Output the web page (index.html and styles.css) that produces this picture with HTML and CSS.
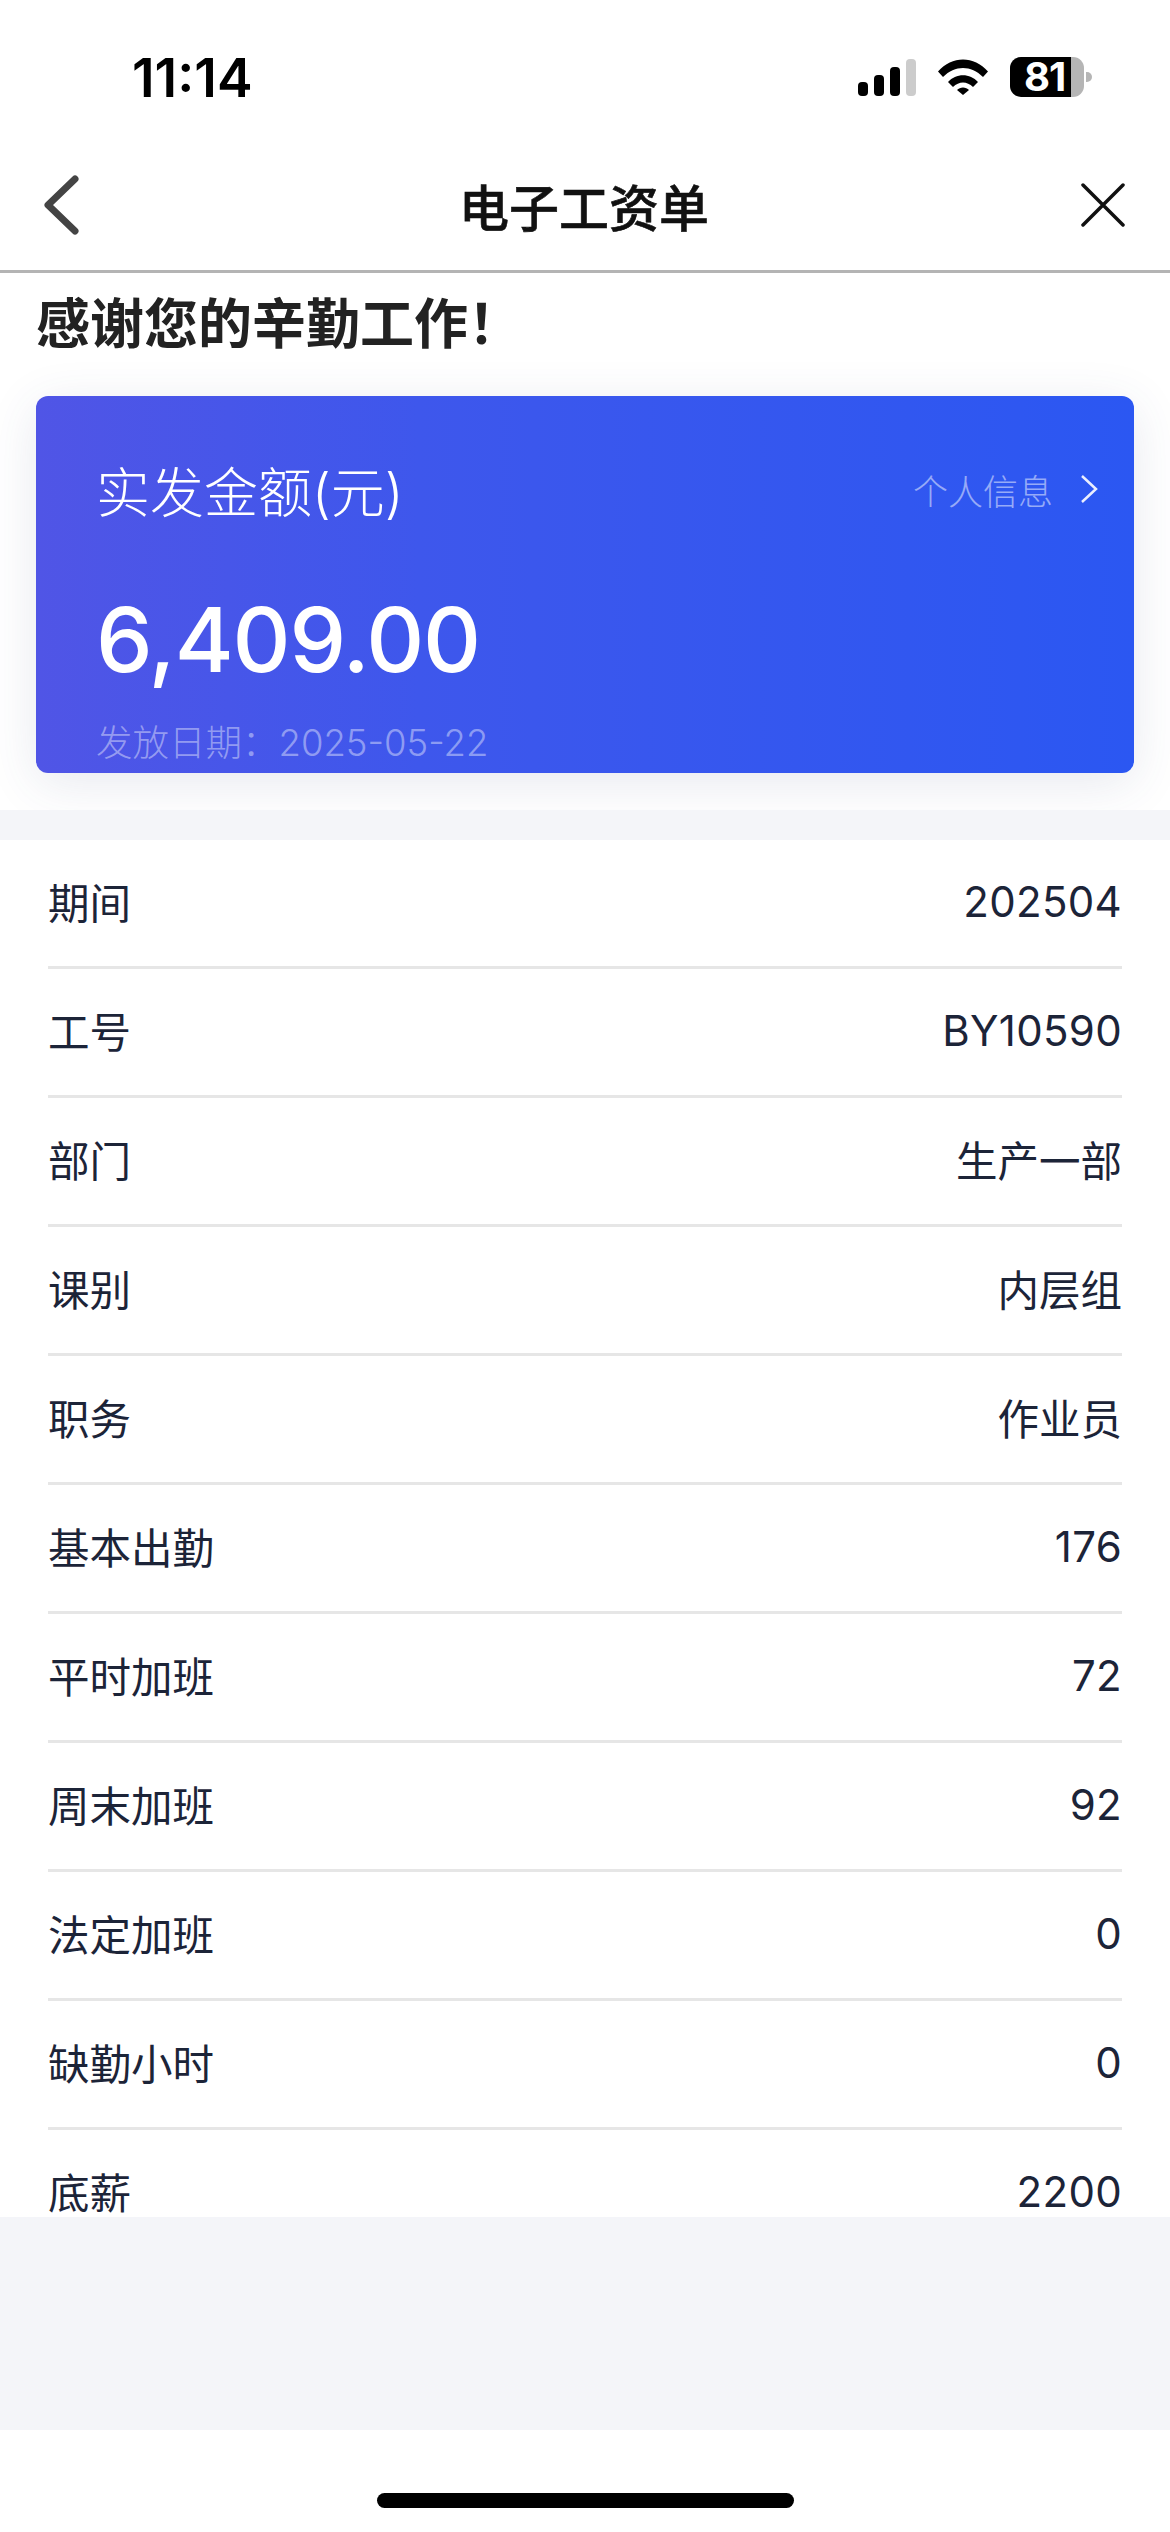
FILE: index.html
```html
<!DOCTYPE html>
<html lang="zh-CN">
<head>
  <meta charset="UTF-8" />
  <meta name="viewport" content="width=device-width, initial-scale=1" />
  <title>电子工资单</title>
  <link rel="stylesheet" href="styles.css">
</head>
<body>

<div class="status-bar">
  <span class="time">11:14</span>
  <div class="status-icons">
    <div class="signal">
      <span class="bar bar-1"></span>
      <span class="bar bar-2"></span>
      <span class="bar bar-3"></span>
      <span class="bar bar-4"></span>
    </div>
    <svg class="wifi" width="50" height="36" viewBox="0 0 50 36">
      <path d="M0 12.5 C14 -3.5 36 -3.5 50 12.5 L45 18 C33 6 17 6 5 18 Z" fill="#000"/>
      <path d="M10 23 C18 14 32 14 40 23 L35 28 C29 22 21 22 15 28 Z" fill="#000"/>
      <path d="M19 31 C22 27.5 28 27.5 31 31 L25 36 Z" fill="#000"/>
    </svg>
    <div class="battery">
      <div class="battery-body"><span class="battery-level">81</span></div>
      <span class="battery-nub"></span>
    </div>
  </div>
</div>

<div class="nav">
  <svg class="back" width="36" height="60" viewBox="0 0 36 60">
    <path d="M32 4 L5 30 L32 56" fill="none" stroke="#444" stroke-width="7" stroke-linecap="round" stroke-linejoin="round"/>
  </svg>
  <h1 class="nav-title">电子工资单</h1>
  <svg class="close" width="44" height="44" viewBox="0 0 44 44">
    <path d="M2 2 L42 42 M42 2 L2 42" fill="none" stroke="#111" stroke-width="3.5" stroke-linecap="round"/>
  </svg>
</div>

<div class="summary">
  <h2 class="thanks">感谢您的辛勤工作！</h2>
  <div class="pay-card">
    <div class="pay-top">
      <span class="pay-label">实发金额(元)</span>
      <span class="pay-link">个人信息
        <svg class="pay-arrow" width="20" height="30" viewBox="0 0 20 30">
          <path d="M3 2 L17 15 L3 28" fill="none" stroke="#fff" stroke-opacity="0.9" stroke-width="2.5"/>
        </svg>
      </span>
    </div>
    <div class="pay-amount">6,409.00</div>
    <div class="pay-date">发放日期：2025-05-22</div>
  </div>
</div>

<div class="band"></div>

<div class="detail-list">
  <div class="row"><span>期间</span><span class="num">202504</span></div>
  <div class="row"><span>工号</span><span class="num">BY10590</span></div>
  <div class="row"><span>部门</span><span>生产一部</span></div>
  <div class="row"><span>课别</span><span>内层组</span></div>
  <div class="row"><span>职务</span><span>作业员</span></div>
  <div class="row"><span>基本出勤</span><span class="num">176</span></div>
  <div class="row"><span>平时加班</span><span class="num">72</span></div>
  <div class="row"><span>周末加班</span><span class="num">92</span></div>
  <div class="row"><span>法定加班</span><span class="num">0</span></div>
  <div class="row"><span>缺勤小时</span><span class="num">0</span></div>
  <div class="row"><span>底薪</span><span class="num">2200</span></div>
</div>

<div class="empty"></div>

<div class="home-area">
  <div class="home-bar"></div>
</div>

</body>
</html>
```

FILE: styles.css
```css
html, body {
  margin: 0;
  padding: 0;
}

body {
  width: 1170px;
  height: 2532px;
  overflow: hidden;
  background-color: #fff;
  font-family: Inter, "Noto Sans CJK SC", sans-serif;
  color: #1c2438;
}

.status-bar {
  height: 130px;
  box-sizing: border-box;
  padding: 50px 78px 0 132px;
  display: flex;
  justify-content: space-between;
  align-items: flex-start;
}

.time {
  font-size: 53.5px;
  line-height: 56px;
  font-weight: 600;
  color: #000;
}

.status-icons {
  display: flex;
  align-items: flex-start;
  gap: 22px;
  padding-top: 7px;
}

.signal {
  display: flex;
  align-items: flex-end;
  gap: 6px;
  height: 37px;
  margin-top: 2px;
}

.bar {
  width: 10px;
  border-radius: 4px;
  background-color: #000;
}

.bar-1 { height: 14px; }
.bar-2 { height: 21px; }
.bar-3 { height: 29px; }
.bar-4 { height: 37px; background-color: #ccc; }

.wifi {
  margin-top: 2px;
}

.battery {
  display: flex;
  align-items: center;
  gap: 2px;
}

.battery-body {
  width: 74px;
  height: 40px;
  border-radius: 11px;
  background: linear-gradient(to right, #000 82%, #b5b5b5 82%);
}

.battery-level {
  display: block;
  padding-left: 14px;
  font-size: 40px;
  line-height: 40px;
  font-weight: 700;
  letter-spacing: -1px;
  color: #fff;
}

.battery-nub {
  width: 6px;
  height: 10px;
  border-radius: 0 5px 5px 0;
  background-color: #b5b5b5;
}

.nav {
  height: 143px;
  box-sizing: border-box;
  border-bottom: 3px solid #b4b4b4;
  padding: 10px 45px 0 43px;
  display: flex;
  justify-content: space-between;
  align-items: center;
}

.nav-title {
  margin: 0 0 0 8px;
  font-size: 50px;
  font-weight: 500;
  color: #111;
  -webkit-text-stroke: 0.6px #111;
}

.summary {
  height: 537px;
  box-sizing: border-box;
  padding: 0 36px;
}

.thanks {
  margin: 0;
  padding-top: 20px;
  height: 123px;
  box-sizing: border-box;
  font-size: 54px;
  line-height: 64px;
  font-weight: 700;
  color: #222;
  white-space: nowrap;
}

.pay-card {
  height: 377px;
  box-sizing: border-box;
  padding: 60px 35px 0 60px;
  border-radius: 12px;
  background: linear-gradient(to right, #5055e6, #3e57ec 35%, #2b57f2);
  box-shadow: 0 10px 50px rgba(60, 70, 120, 0.12);
  color: #fff;
}

.pay-top {
  display: flex;
  justify-content: space-between;
  align-items: center;
  height: 66px;
}

.pay-label {
  font-size: 54px;
  font-weight: 300;
}

.pay-link {
  display: flex;
  align-items: center;
  gap: 26px;
  font-size: 35px;
  font-weight: 300;
  color: rgba(255, 255, 255, 0.5);
}

.pay-amount {
  margin-top: 68px;
  font-size: 90px;
  line-height: 100px;
  font-weight: 500;
  letter-spacing: -1.2px;
}

.pay-date {
  margin-top: 28px;
  font-size: 36.5px;
  line-height: 50px;
  font-weight: 300;
  color: rgba(255, 255, 255, 0.42);
  white-space: nowrap;
}

.band {
  height: 30px;
  background-color: #f4f5f9;
}

.detail-list {
  height: 1377px;
  overflow: hidden;
  padding: 0 48px;
}

.row {
  height: 129px;
  box-sizing: border-box;
  border-bottom: 3px solid #e6e6e6;
  padding-bottom: 4px;
  display: flex;
  justify-content: space-between;
  align-items: center;
  font-size: 41.5px;
}

.num {
  font-size: 42px;
  letter-spacing: 0.3px;
}

.empty {
  height: 213px;
  background-color: #f4f5f9;
}

.home-area {
  padding-top: 63px;
  display: flex;
  justify-content: center;
}

.home-bar {
  width: 417px;
  height: 15px;
  border-radius: 8px;
  background-color: #000;
}
```
